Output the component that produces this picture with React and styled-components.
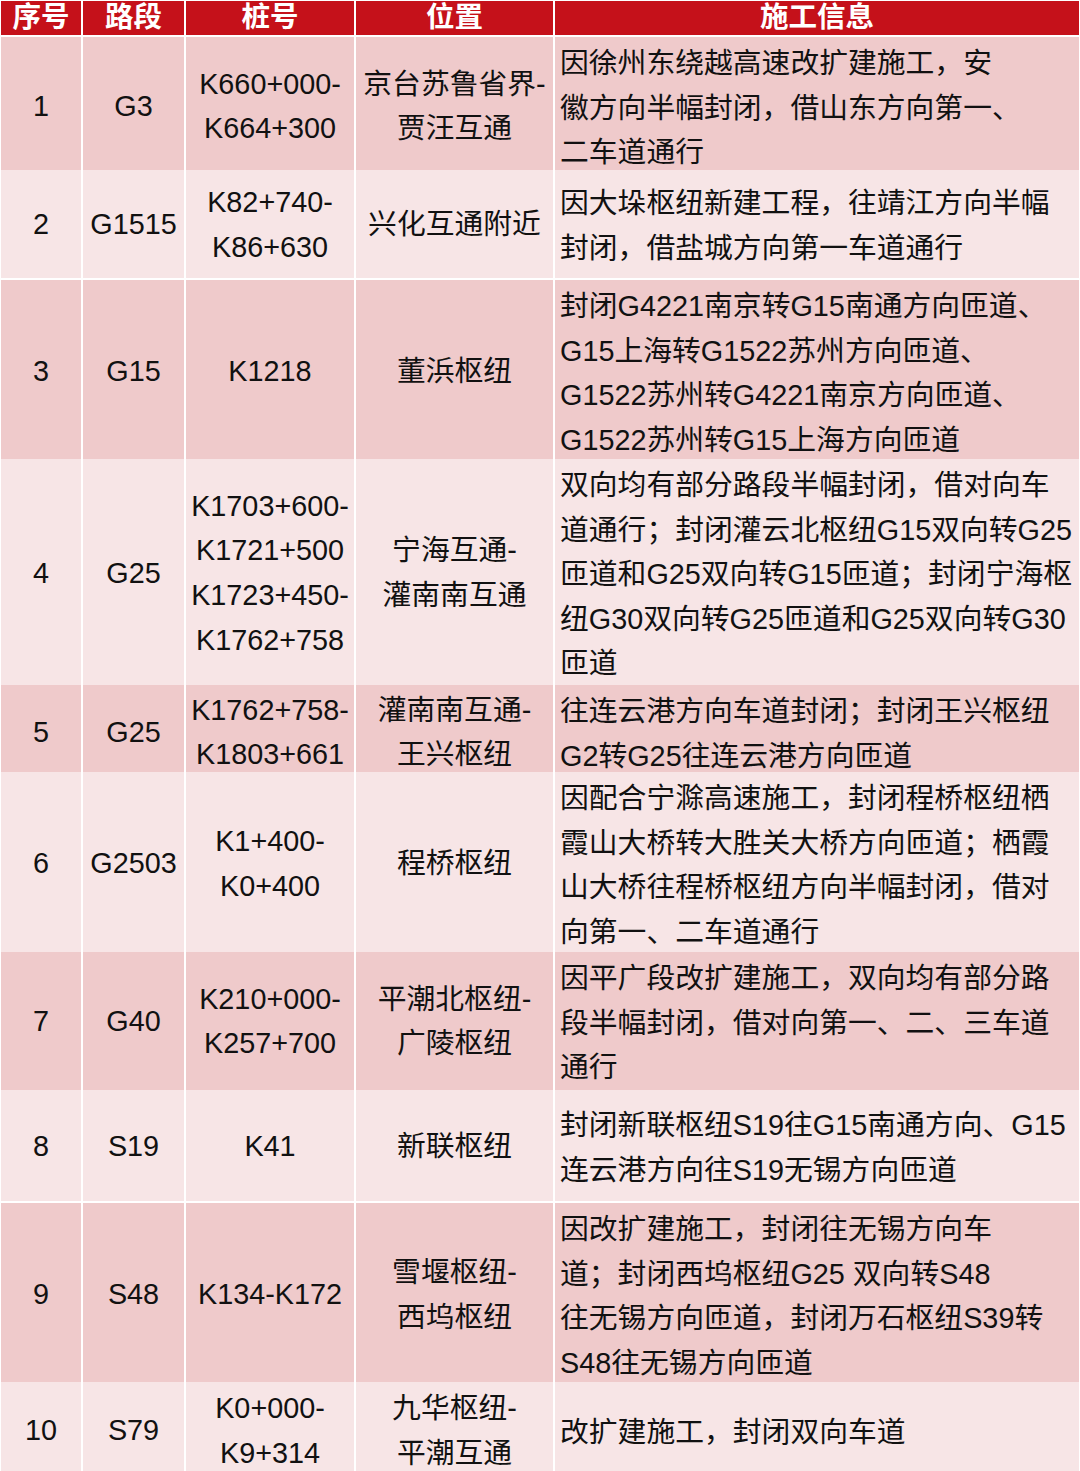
import React from "react";
import styled, { createGlobalStyle } from "styled-components";

const GlobalStyle = createGlobalStyle`
  html, body {
    margin: 0;
    padding: 0;
    background: #ffffff;
  }
  body {
    font-family: "Liberation Sans", "Noto Sans CJK SC", sans-serif;
  }
`;

const COLS = "80px 101px 168px 197px 1fr";

const Table = styled.div`
  display: flex;
  flex-direction: column;
  gap: 2px;
  width: 1080px;
  padding: 1px 1px 0 1px;
  box-sizing: border-box;
  background: #ffffff;
  height: 1471px;
  overflow: hidden;
`;

const Row = styled.div`
  display: grid;
  grid-template-columns: ${COLS};
  column-gap: 2px;
  height: ${(p) => p.$h}px;
  flex-shrink: 0;
`;

const HeadCell = styled.div`
  background: #c5111a;
  color: #ffffff;
  font-size: 28.5px;
  font-weight: bold;
  line-height: 33px;
  text-align: center;
  white-space: nowrap;
  overflow: hidden;
`;

const Cell = styled.div`
  display: flex;
  flex-direction: column;
  justify-content: center;
  align-items: ${(p) => (p.$left ? "flex-start" : "center")};
  background: ${(p) => (p.$tone === "dark" ? "#efcacb" : "#f7e5e6")};
  color: #111111;
  font-size: 28.8px;
  line-height: 44.6px;
  text-align: ${(p) => (p.$left ? "left" : "center")};
  padding: ${(p) => (p.$left ? "4px 0 0 5px" : "1px 0 0 0")};
  box-sizing: border-box;
  white-space: nowrap;
  overflow: visible;
`;

const Line = styled.span`
  display: block;
`;

const rows = [
  {
    h: 131,
    no: "1",
    road: "G3",
    stake: ["K660+000-", "K664+300"],
    place: ["京台苏鲁省界-", "贾汪互通"],
    info: ["因徐州东绕越高速改扩建施工，安", "徽方向半幅封闭，借山东方向第一、", "二车道通行"],
  },
  {
    h: 108,
    no: "2",
    road: "G1515",
    stake: ["K82+740-", "K86+630"],
    place: ["兴化互通附近"],
    info: ["因大垛枢纽新建工程，往靖江方向半幅", "封闭，借盐城方向第一车道通行"],
  },
  {
    h: 177,
    no: "3",
    road: "G15",
    stake: ["K1218"],
    place: ["董浜枢纽"],
    info: [
      "封闭G4221南京转G15南通方向匝道、",
      "G15上海转G1522苏州方向匝道、",
      "G1522苏州转G4221南京方向匝道、",
      "G1522苏州转G15上海方向匝道",
    ],
  },
  {
    h: 224,
    no: "4",
    road: "G25",
    stake: ["K1703+600-", "K1721+500", "K1723+450-", "K1762+758"],
    place: ["宁海互通-", "灌南南互通"],
    info: [
      "双向均有部分路段半幅封闭，借对向车",
      "道通行；封闭灌云北枢纽G15双向转G25",
      "匝道和G25双向转G15匝道；封闭宁海枢",
      "纽G30双向转G25匝道和G25双向转G30",
      "匝道",
    ],
  },
  {
    h: 85,
    no: "5",
    road: "G25",
    stake: ["K1762+758-", "K1803+661"],
    place: ["灌南南互通-", "王兴枢纽"],
    info: ["往连云港方向车道封闭；封闭王兴枢纽", "G2转G25往连云港方向匝道"],
  },
  {
    h: 178,
    no: "6",
    road: "G2503",
    stake: ["K1+400-", "K0+400"],
    place: ["程桥枢纽"],
    info: [
      "因配合宁滁高速施工，封闭程桥枢纽栖",
      "霞山大桥转大胜关大桥方向匝道；栖霞",
      "山大桥往程桥枢纽方向半幅封闭，借对",
      "向第一、二车道通行",
    ],
  },
  {
    h: 136,
    no: "7",
    road: "G40",
    stake: ["K210+000-", "K257+700"],
    place: ["平潮北枢纽-", "广陵枢纽"],
    info: ["因平广段改扩建施工，双向均有部分路", "段半幅封闭，借对向第一、二、三车道", "通行"],
  },
  {
    h: 111,
    no: "8",
    road: "S19",
    stake: ["K41"],
    place: ["新联枢纽"],
    info: ["封闭新联枢纽S19往G15南通方向、G15", "连云港方向往S19无锡方向匝道"],
  },
  {
    h: 177,
    no: "9",
    road: "S48",
    stake: ["K134-K172"],
    place: ["雪堰枢纽-", "西坞枢纽"],
    info: [
      "因改扩建施工，封闭往无锡方向车",
      "道；封闭西坞枢纽G25 双向转S48",
      "往无锡方向匝道，封闭万石枢纽S39转",
      "S48往无锡方向匝道",
    ],
  },
  {
    h: 96,
    no: "10",
    road: "S79",
    stake: ["K0+000-", "K9+314"],
    place: ["九华枢纽-", "平潮互通"],
    info: ["改扩建施工，封闭双向车道"],
  },
];

const Lines = ({ items }) =>
  items.map((t, i) => <Line key={i}>{t}</Line>);

const App = () => {
  return (
    <>
      <GlobalStyle />
      <Table>
        <Row $h={34}>
          <HeadCell>序号</HeadCell>
          <HeadCell>路段</HeadCell>
          <HeadCell>桩号</HeadCell>
          <HeadCell>位置</HeadCell>
          <HeadCell>施工信息</HeadCell>
        </Row>
        {rows.map((r, i) => {
          const tone = i % 2 === 0 ? "dark" : "light";
          return (
            <Row key={r.no} $h={r.h}>
              <Cell $tone={tone}>{r.no}</Cell>
              <Cell $tone={tone}>{r.road}</Cell>
              <Cell $tone={tone}>
                <Lines items={r.stake} />
              </Cell>
              <Cell $tone={tone}>
                <Lines items={r.place} />
              </Cell>
              <Cell $tone={tone} $left>
                <Lines items={r.info} />
              </Cell>
            </Row>
          );
        })}
      </Table>
    </>
  );
};

export default App;
